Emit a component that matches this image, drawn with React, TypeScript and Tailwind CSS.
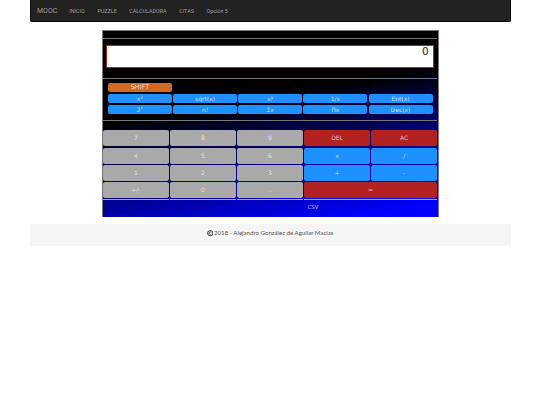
import type { ReactNode } from "react";

const navItems = ["INICIO", "PUZZLE", "CALCULADORA", "CITAS", "Opción 5"];
const sciKeys: { id: string; label: ReactNode }[] = [
  { id: "sq", label: <>x<sup>2</sup></> },
  { id: "sqrt", label: "sqrt(x)" },
  { id: "pow", label: <>x<sup>y</sup></> },
  { id: "inv", label: "1/x" },
  { id: "ent", label: "Ent(x)" },
  { id: "two", label: <>2<sup>x</sup></> },
  { id: "fact", label: "n!" },
  { id: "sum", label: "Σx" },
  { id: "prod", label: "Πx" },
  { id: "dec", label: "Dec(x)" },
];

const gray = "bg-[#a9a9a9]";
const blue = "bg-[#1e90ff]";
const red = "bg-[#b22222]";

const keys: { label: string; color: string; wide?: boolean }[] = [
  { label: "7", color: gray }, { label: "8", color: gray }, { label: "9", color: gray }, { label: "DEL", color: red }, { label: "AC", color: red },
  { label: "4", color: gray }, { label: "5", color: gray }, { label: "6", color: gray }, { label: "x", color: blue }, { label: "/", color: blue },
  { label: "1", color: gray }, { label: "2", color: gray }, { label: "3", color: gray }, { label: "+", color: blue }, { label: "-", color: blue },
  { label: "+/-", color: gray }, { label: "0", color: gray }, { label: ".", color: gray }, { label: "=", color: red, wide: true },
];

const hr = "h-px bg-[#777] mx-[0.5px]";

export default function App() {
  return (
    <div className="min-h-[405px] bg-white font-['Roboto','Noto_Sans',sans-serif]">
      <div className="mx-auto w-[481px]">
        <nav className="flex h-[22px] items-center rounded-b-[2px] border border-t-0 border-[#080808] bg-[#222] pl-[6.5px] pt-px text-[#9d9d9d]">
          <span className="mr-[12px] text-[7px]">MOOC</span>
          <div className="flex gap-[12.6px] text-[5.4px]">
            {navItems.map((n) => <span key={n}>{n}</span>)}
          </div>
        </nav>

        <div className="mx-auto mt-2 h-[186.5px] w-[337px] border border-b-0 border-[#777] bg-[linear-gradient(170deg,#000_38%,#00f_95%)] pt-[7.3px] font-['DejaVu_Sans',sans-serif]">
          <div className={hr} />
          <div className="mx-[3.8px] mt-[6px] flex h-[22.5px] justify-end border border-[#b22222] bg-white pr-[4px] text-[10.5px] leading-[11px] text-[#222]">0</div>
          <div className={`${hr} mt-[10px]`} />
          <div className="mt-[4.7px] grid grid-cols-5 gap-x-[1.2px] gap-y-[1.5px] pl-[5.5px] pr-[5px] text-center text-[6px] leading-[9.2px] text-white/75 [&_sup]:text-[4.5px]">
            <div className="col-span-5 h-[9px] w-[64px] rounded-[2px] bg-[#d2691e] text-[6.5px]">SHIFT</div>
            {sciKeys.map((k) => (
              <div key={k.id} className={`h-[9.2px] rounded-[2px] ${blue}`}>{k.label}</div>
            ))}
          </div>
          <div className={`${hr} mt-[5.8px]`} />
          <div className="mt-[9.7px] grid grid-cols-5 gap-x-[1.4px] gap-y-[1.3px] px-[0.5px] text-center text-[6px] leading-[16px] text-white/70">
            {keys.map((k) => (
              <div key={k.label} className={`h-[16px] rounded-[2px] ${k.color} ${k.wide ? "col-span-2" : ""}`}>{k.label}</div>
            ))}
          </div>
          <div className="mt-[0.7px] grid grid-cols-5 gap-x-[1.4px] px-[0.5px]">
            <div className="h-px bg-[#aab]" />
            <div className="h-px bg-[#aab]" />
            <div className="h-px bg-[#aab]" />
            <div className="col-span-2 h-px bg-[#aab]" />
          </div>
          <div className="pl-[205px] pt-[3px] text-[5.5px] leading-[9px] text-white/75">CSV</div>
        </div>

        <footer className="mt-[7.5px] flex h-[22px] items-center justify-center gap-[1px] bg-[#f5f5f5] pb-[4px] font-['Lato',sans-serif] text-[6.1px] text-[#555]">
          <svg viewBox="0 0 16 16" className="h-[6.5px] w-[6.5px]" fill="none" stroke="#333" strokeWidth="2.4">
            <circle cx="8" cy="8" r="6.5" />
            <path d="M10.5 6a3 3 0 1 0 0 4" strokeWidth="2" />
          </svg>
          <span>2018 - Alejandro González de Aguilar Macías</span>
        </footer>
      </div>
    </div>
  );
}
